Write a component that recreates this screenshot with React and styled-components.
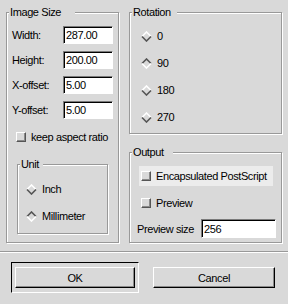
import React from 'react'
import styled, { createGlobalStyle } from 'styled-components'

const GlobalStyle = createGlobalStyle`
  body {
    margin: 0;
    background: #d9d9d9;
  }
`

const Diamond = ({ on }) => {
  const top = on ? '#555' : '#fff'
  const bottom = on ? '#fff' : '#555'
  return (
    <svg width="11" height="11" viewBox="0 0 11 11">
      <polyline points="1,5.5 5.5,1 10,5.5" fill="none" stroke={top} strokeWidth="1.6" />
      <polyline points="1,5.5 5.5,10 10,5.5" fill="none" stroke={bottom} strokeWidth="1.6" />
    </svg>
  )
}

const App = () => {
  return (
    <Dialog>
      <GlobalStyle />
      <Panels>
        <Frame>
          <Title $pr={14}>Image Size</Title>
          <Fields>
            <Label>Width:</Label>
            <Entry readOnly value="287.00" />
            <Label>Height:</Label>
            <Entry readOnly value="200.00" />
            <Label>X-offset:</Label>
            <Entry readOnly value="5.00" />
            <Label>Y-offset:</Label>
            <Entry readOnly value="5.00" />
          </Fields>
          <CheckRow $top={11} $left={4} $h={14}>
            <Box />
            keep aspect ratio
          </CheckRow>
          <UnitFrame>
            <Title $pr={4}>Unit</Title>
            <RadioList>
              <Radio><Diamond />Inch</Radio>
              <Radio><Diamond on />Millimeter</Radio>
            </RadioList>
          </UnitFrame>
        </Frame>

        <Column>
          <RotationFrame>
            <Title $pr={6}>Rotation</Title>
            <RadioList>
              <Radio><Diamond />0</Radio>
              <Radio><Diamond on />90</Radio>
              <Radio><Diamond />180</Radio>
              <Radio><Diamond />270</Radio>
            </RadioList>
          </RotationFrame>
          <OutputFrame>
            <Title $pr={9}>Output</Title>
            <CheckRow $top={0} $left={9} $h={20} $pad={2} $active>
              <Box />
              Encapsulated PostScript
            </CheckRow>
            <CheckRow $top={7} $left={9} $h={20} $pad={2}>
              <Box />
              Preview
            </CheckRow>
            <SizeRow>
              <SizeLabel>Preview size</SizeLabel>
              <Entry readOnly value="256" $wide />
            </SizeRow>
          </OutputFrame>
        </Column>
      </Panels>

      <Separator />

      <Buttons>
        <DefaultRing>
          <Button $w={120}>OK</Button>
        </DefaultRing>
        <Button $w={122}>Cancel</Button>
      </Buttons>
    </Dialog>
  )
}

export default App

const Dialog = styled.div`
  width: 288px;
  height: 304px;
  background: #d9d9d9;
  color: #000;
  font-family: "Liberation Sans", Arial, sans-serif;
  font-size: 11px;
  letter-spacing: -0.4px;
  overflow: hidden;
`

const Panels = styled.div`
  display: grid;
  grid-template-columns: 113px 153px;
  column-gap: 10px;
  height: 231px;
  padding: 12px 6px 0 6px;
`

const Column = styled.div`
  display: flex;
  flex-direction: column;
  gap: 18px;
`

const Frame = styled.div`
  position: relative;
  box-sizing: border-box;
  border: 1px solid #999;
  box-shadow: inset 1px 1px 0 #fff, 1px 1px 0 #fff;
  padding: 13px 4px 0 5px;
`

const UnitFrame = styled(Frame)`
  width: 91px;
  height: 70px;
  margin: 20px 0 0 5px;
  padding: 16px 0 0 8px;
`

const RotationFrame = styled(Frame)`
  height: 122px;
  padding: 15px 0 0 11px;
`

const OutputFrame = styled(Frame)`
  flex: 1;
  padding: 13px 0 0 0;
`

const Title = styled.div`
  position: absolute;
  top: -8px;
  left: 2px;
  line-height: 14px;
  padding: 0 ${p => p.$pr}px 0 1px;
  background: #d9d9d9;
  white-space: nowrap;
`

const Fields = styled.div`
  display: grid;
  grid-template-columns: 51px 50px;
  grid-auto-rows: 18px;
  row-gap: 7px;
  align-items: center;
`

const Label = styled.span`
  white-space: nowrap;
`

const Entry = styled.input`
  box-sizing: border-box;
  width: ${p => (p.$wide ? 75 : 50)}px;
  height: ${p => (p.$wide ? 19 : 18)}px;
  margin: 0;
  padding: 0 0 0 2px;
  border: 1px solid;
  border-color: #7a7a7a #fff #fff #7a7a7a;
  box-shadow: inset 1px 1px 0 #000;
  background: #fff;
  color: #000;
  font: inherit;
  letter-spacing: inherit;
  outline: none;
`

const CheckRow = styled.div`
  display: flex;
  align-items: center;
  gap: 5px;
  width: 134px;
  height: ${p => p.$h}px;
  margin: ${p => p.$top}px 0 0 ${p => p.$left}px;
  padding-left: ${p => p.$pad || 0}px;
  box-sizing: border-box;
  background: ${p => (p.$active ? '#ececec' : 'transparent')};
  white-space: nowrap;
`

const Box = styled.span`
  box-sizing: border-box;
  flex: none;
  width: 10px;
  height: 10px;
  border: 1px solid;
  border-color: #fff #555 #555 #fff;
  box-shadow: inset -1px -1px 0 #8a8a8a;
  background: #d9d9d9;
`

const RadioList = styled.div`
  display: flex;
  flex-direction: column;
  gap: 11px;
`

const Radio = styled.div`
  display: flex;
  align-items: center;
  gap: 5px;
  height: 16px;
  white-space: nowrap;
`

const SizeRow = styled.div`
  display: flex;
  align-items: center;
  margin: 6px 0 0 7px;
`

const SizeLabel = styled.span`
  width: 64px;
  white-space: nowrap;
`

const Separator = styled.div`
  margin-top: 8px;
  border-top: 1px solid #999;
  border-bottom: 1px solid #fff;
`

const Buttons = styled.div`
  display: flex;
  align-items: center;
  gap: 14px;
  padding: 9px 0 0 11px;
`

const DefaultRing = styled.div`
  display: flex;
  padding: 4px 3px;
  border: 1px solid;
  border-color: #000 #fff #fff #000;
`

const Button = styled.div`
  box-sizing: border-box;
  width: ${p => p.$w}px;
  height: 21px;
  display: flex;
  align-items: center;
  justify-content: center;
  border: 1px solid;
  border-color: #fff #000 #000 #fff;
  box-shadow: inset -1px -1px 0 #8a8a8a;
  background: #d9d9d9;
`
